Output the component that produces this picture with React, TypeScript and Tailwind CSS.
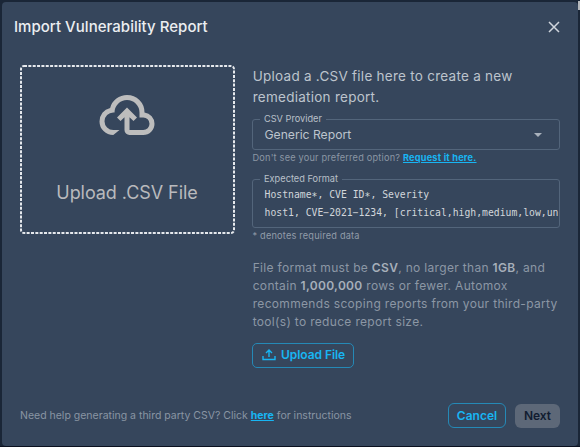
import React from "react";

const legend = "absolute left-[7px] bg-[#36465c] px-1 text-[9.2px] leading-[12px] text-[#b9c0c9]";

function Star() {
  return <span className="relative top-[1.5px]">*</span>;
}

export default function App() {
  return (
    <div className="relative h-[447px] w-[580px] overflow-hidden bg-[#1a2637] px-[2px] pt-[2px] font-['Inter',sans-serif]">
      <div className="absolute right-0 top-[1px] h-[9px] w-[2px] bg-[#b5b8bc]" />
      <div className="absolute bottom-0 left-0 h-[1px] w-full bg-[#0b1120]" />
      <main className="relative flex h-[444px] w-[576px] flex-col rounded-[4px] bg-[#36465c]">
        <header className="flex h-[63px] shrink-0 items-start justify-between pl-3 pr-[18px] pt-[13px]">
          <h1 className="whitespace-nowrap text-[15px] font-medium leading-6 tracking-[0.03px] text-[#eceef1]">Import Vulnerability Report</h1>
          <svg className="mt-[6px] h-[12px] w-[12px]" viewBox="0 0 12 12" stroke="#d0d5dc" strokeWidth="1.5"><path d="M1 1l10 10M11 1L1 11" /></svg>
        </header>
        <div className="flex h-[310px] shrink-0 pl-[18px]">
          <section className="relative flex h-[169px] w-[215px] flex-col items-center">
            <svg className="absolute inset-0" width="215" height="169" fill="none" stroke="#e6e9ed" strokeWidth="2"><rect x="1" y="1" width="213" height="167" rx="3" strokeDasharray="3 1.35" /></svg>
            <svg className="mr-[1px] mt-5 h-[60px] w-[60px]" viewBox="0 0 24 24" fill="#bdbdbd"><path d="M6.5 20Q4.22 20 2.61 18.43 1 16.85 1 14.58 1 12.63 2.17 11.1 3.35 9.57 5.25 9.15 5.88 6.85 7.75 5.43 9.63 4 12 4 14.93 4 16.96 6.04 19 8.07 19 11 20.73 11.2 21.86 12.5 23 13.78 23 15.5 23 17.38 21.69 18.69 20.38 20 18.5 20H13Q12.18 20 11.59 19.41 11 18.83 11 18V12.85L9.4 14.4 8 13 12 9 16 13 14.6 14.4 13 12.85V18H18.5Q19.55 18 20.27 17.27 21 16.55 21 15.5 21 14.45 20.27 13.73 19.55 13 18.5 13H17V11Q17 8.93 15.54 7.46 14.08 6 12 6 9.93 6 8.46 7.46 7 8.93 7 11H6.5Q5.05 11 4.03 12.03 3 13.05 3 14.5 3 15.95 4.03 17 5.05 18 6.5 18H9Z" /></svg>
            <span className="mr-[1px] mt-[34px] whitespace-nowrap text-[18px] leading-7 tracking-[-0.06px] text-[#b9babd]">Upload .CSV File</span>
          </section>
          <section className="ml-[17px] w-[308px]">
            <p className="whitespace-nowrap pl-[0.7px] pt-[1px] text-[13.5px] leading-[21px] tracking-[0.26px] text-[#bdc4cd]">Upload a .CSV file here to create a new<br />remediation report.</p>
            <div className="relative mt-[11px] flex h-[31px] items-center justify-between rounded-[3px] border border-[#53657b] pl-[11.5px] pr-[17px] text-[12.2px] text-[#bdc4cd]">
              <span className={`${legend} -top-[7px] tracking-[0px]`}>CSV Provider</span>
              <span className="leading-5 tracking-[-0.02px]">Generic Report</span>
              <svg width="8" height="4" viewBox="0 0 8 4" fill="#a9b1bc"><path d="M0 0h8L4 4z" /></svg>
            </div>
            <p className="mt-[1px] whitespace-nowrap pl-[0.5px] text-[9.2px] leading-[13px] tracking-[0.2px] text-[#8b96a4]">Don't see your preferred option? <a className="font-bold text-[#18b5f3] underline">Request it here.</a></p>
            <div className="relative mt-[15px] h-[49px] rounded-[3px] border border-[#53657b] pl-[11.5px] pt-[6px]">
              <span className={`${legend} -top-[7px] tracking-[0.03px]`}>Expected Format</span>
              <pre className="font-['DejaVu_Sans_Mono',monospace] text-[9.78px] leading-[18px] text-[#d2d6db]">Hostname<Star />, CVE ID<Star />, Severity{"\n"}host1, CVE−2021−1234, [critical,high,medium,low,un</pre>
            </div>
            <p className="mt-[1px] pl-[0.5px] text-[9.2px] leading-[13px] tracking-[0.2px] text-[#929ca9]">* denotes required data</p>
            <p className="mt-[17px] whitespace-nowrap pl-[0.7px] text-[12px] leading-[18px] tracking-[0.32px] text-[#8c97a5] [&_b]:font-semibold [&_b]:text-[#a6afba]">File format must be <b>CSV</b>, no larger than <b>1GB</b>, and<br />contain <b>1,000,000</b> rows or fewer. Automox<br />recommends scoping reports from your third-party<br />tool(s) to reduce report size.</p>
            <button className="mt-[12px] flex h-[25px] w-[102px] items-center rounded-[5px] border border-[#2589b6] pb-[1px] pl-[9px] text-[12px] font-semibold text-[#18b5f3]">
              <svg className="mr-[5px]" width="14" height="12" viewBox="0 0 14 12" fill="none" stroke="currentColor" strokeWidth="1.4"><path d="M1 7v3.5h12V7M7 8V1.5M4 4l3-3 3 3" /></svg>
              <span className="whitespace-nowrap tracking-[-0.05px]">Upload File</span>
            </button>
          </section>
        </div>
        <footer className="flex h-[71px] shrink-0 items-center px-[18px] pt-[10px]">
          <p className="whitespace-nowrap text-[10.5px] text-[#8995a3]">Need help generating a third party CSV? Click <a className="font-bold text-[#18b5f3] underline">here</a> for instructions</p>
          <button className="ml-auto h-[25px] w-[58px] rounded-[6px] border border-[#2589b6] text-[12px] font-semibold text-[#18b5f3]">Cancel</button>
          <button className="ml-[9px] h-[24px] w-[45px] rounded-[6px] bg-[#5d6878] text-[12px] font-semibold text-[#111c30]">Next</button>
        </footer>
      </main>
    </div>
  );
}
